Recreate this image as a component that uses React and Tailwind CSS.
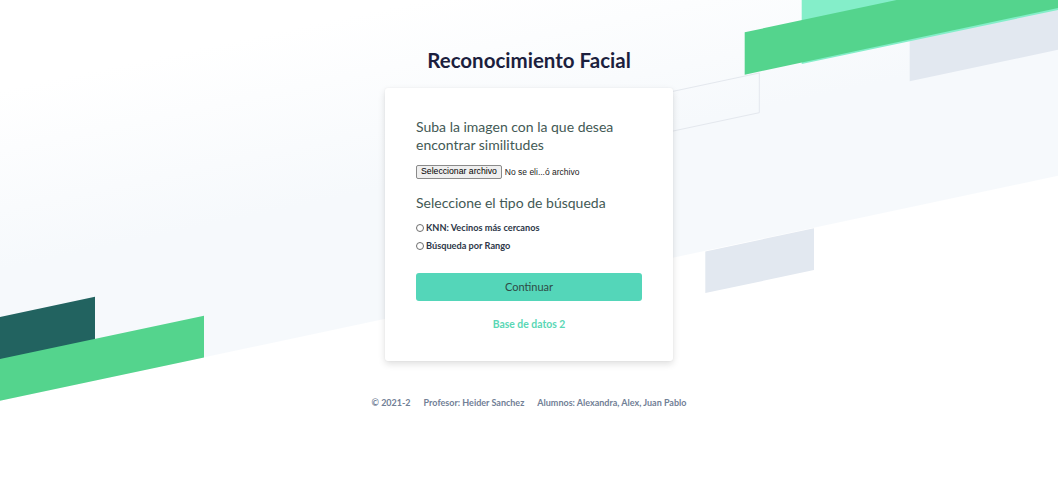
import React from "react";

const S = 0.2126;
const line = (x0, y0) => (x) => y0 - S * (x - x0);

function Background() {
  const band = line(220, 354);
  const gTop = line(744.7, 32.3);
  const gBot = line(744.7, 74.7);
  const grTop = line(909.7, 39.3);
  const grBot = line(909.7, 81.3);
  const oTop = line(759.3, 73);
  const oBot = line(759.3, 112.7);
  const bTop = line(814, 228.3);
  const bBot = line(814, 270);
  const tTop = line(95, 296.7);
  const lgTop = line(0, 359);
  const lgBot = line(0, 400.8);
  const p = (pts) => pts.map(([x, y]) => `${x},${y}`).join(" ");
  return (
    <svg
      className="absolute inset-0 w-full h-full"
      viewBox="0 0 1058 502"
      preserveAspectRatio="none"
    >
      <defs>
        <linearGradient
          id="bandGrad"
          gradientUnits="userSpaceOnUse"
          x1="0"
          y1="90"
          x2="0"
          y2="270"
          gradientTransform="skewY(-12)"
        >
          <stop offset="0" stopColor="#ffffff" />
          <stop offset="1" stopColor="#f6f9fc" />
        </linearGradient>
      </defs>
      <polygon
        points={p([
          [0, 0],
          [1058, 0],
          [1058, band(1058)],
          [0, band(0)],
        ])}
        fill="url(#bandGrad)"
      />
      <polygon
        points={p([
          [560, oTop(560)],
          [759.3, oTop(759.3)],
          [759.3, oBot(759.3)],
          [560, oBot(560)],
        ])}
        fill="none"
        stroke="#e4e8ee"
        strokeWidth="1"
      />
      <polygon
        points={p([
          [909.7, grTop(909.7)],
          [1058, grTop(1058)],
          [1058, grBot(1058)],
          [909.7, grBot(909.7)],
        ])}
        fill="#e2e8f0"
      />
      <polygon
        points={p([
          [801.7, 0],
          [1058, 0],
          [1058, 10],
          [801.7, 64],
        ])}
        fill="#84eec9"
      />
      <polygon
        points={p([
          [744.7, gTop(744.7)],
          [1058, gTop(1058)],
          [1058, gBot(1058)],
          [744.7, gBot(744.7)],
        ])}
        fill="#54d48d"
      />
      <polygon
        points={p([
          [705.3, bTop(705.3)],
          [814, bTop(814)],
          [814, bBot(814)],
          [705.3, bBot(705.3)],
        ])}
        fill="#e2e8f0"
      />
      <polygon
        points={p([
          [0, tTop(0)],
          [95, tTop(95)],
          [95, tTop(95) + 44],
          [0, tTop(0) + 44],
        ])}
        fill="#226360"
      />
      <polygon
        points={p([
          [0, lgTop(0)],
          [204, lgTop(204)],
          [204, lgBot(204)],
          [0, lgBot(0)],
        ])}
        fill="#54d48d"
      />
    </svg>
  );
}

function Radio({ label }) {
  return (
    <label className="flex items-center gap-[2px] h-[18px]">
      <span className="w-[8px] h-[8px] rounded-full border border-[#6e6e6e] bg-white" />
      <span className="text-[9.2px] font-bold text-[#2d3748]">{label}</span>
    </label>
  );
}

export default function App() {
  return (
    <div
      className="relative w-[1058px] h-[502px] overflow-hidden bg-white"
      style={{ fontFamily: "Lato, 'Noto Sans', sans-serif" }}
    >
      <Background />
      <div className="relative flex flex-col items-center pt-[46px]">
        <h1 className="text-[20.5px] leading-[28px] font-bold text-[#1c1f3e]">
          Reconocimiento Facial
        </h1>
        <div className="mt-[14px] w-[288px] h-[273px] bg-white rounded-[3px] shadow-[0_3px_7px_rgba(0,0,0,0.13),0_0_2px_rgba(0,0,0,0.06)] px-[31px] pt-[30px]">
          <p className="text-[14px] leading-[18px] text-[#435955]">
            Suba la imagen con la que desea encontrar similitudes
          </p>
          <div
            className="mt-[11px] flex items-center"
            style={{ fontFamily: "'Liberation Sans', Arial, sans-serif" }}
          >
            <span className="h-[14px] px-[4px] flex items-center bg-[#efefef] border border-[#8a8a8a] rounded-[2px] text-[8.7px] text-black">
              Seleccionar archivo
            </span>
            <span className="ml-[3px] text-[8.5px] text-[#222]">
              No se eli...ó archivo
            </span>
          </div>
          <p className="mt-[15px] text-[14px] leading-[18px] text-[#435955]">
            Seleccione el tipo de búsqueda
          </p>
          <div className="mt-[7px] flex flex-col">
            <Radio label="KNN: Vecinos más cercanos" />
            <Radio label="Búsqueda por Rango" />
          </div>
          <button className="mt-[18px] w-full h-[28px] rounded-[3px] bg-[#54d6b9] text-[11px] text-[#2f4a45]">
            Continuar
          </button>
          <div className="mt-[16px] text-center text-[10.4px] font-bold text-[#5ad7b5]">
            Base de datos 2
          </div>
        </div>
        <div className="mt-[35px] flex gap-[13px] text-[9px] font-bold text-[#718096]">
          <span>© 2021-2</span>
          <span>Profesor: Heider Sanchez</span>
          <span>Alumnos: Alexandra, Alex, Juan Pablo</span>
        </div>
      </div>
    </div>
  );
}
